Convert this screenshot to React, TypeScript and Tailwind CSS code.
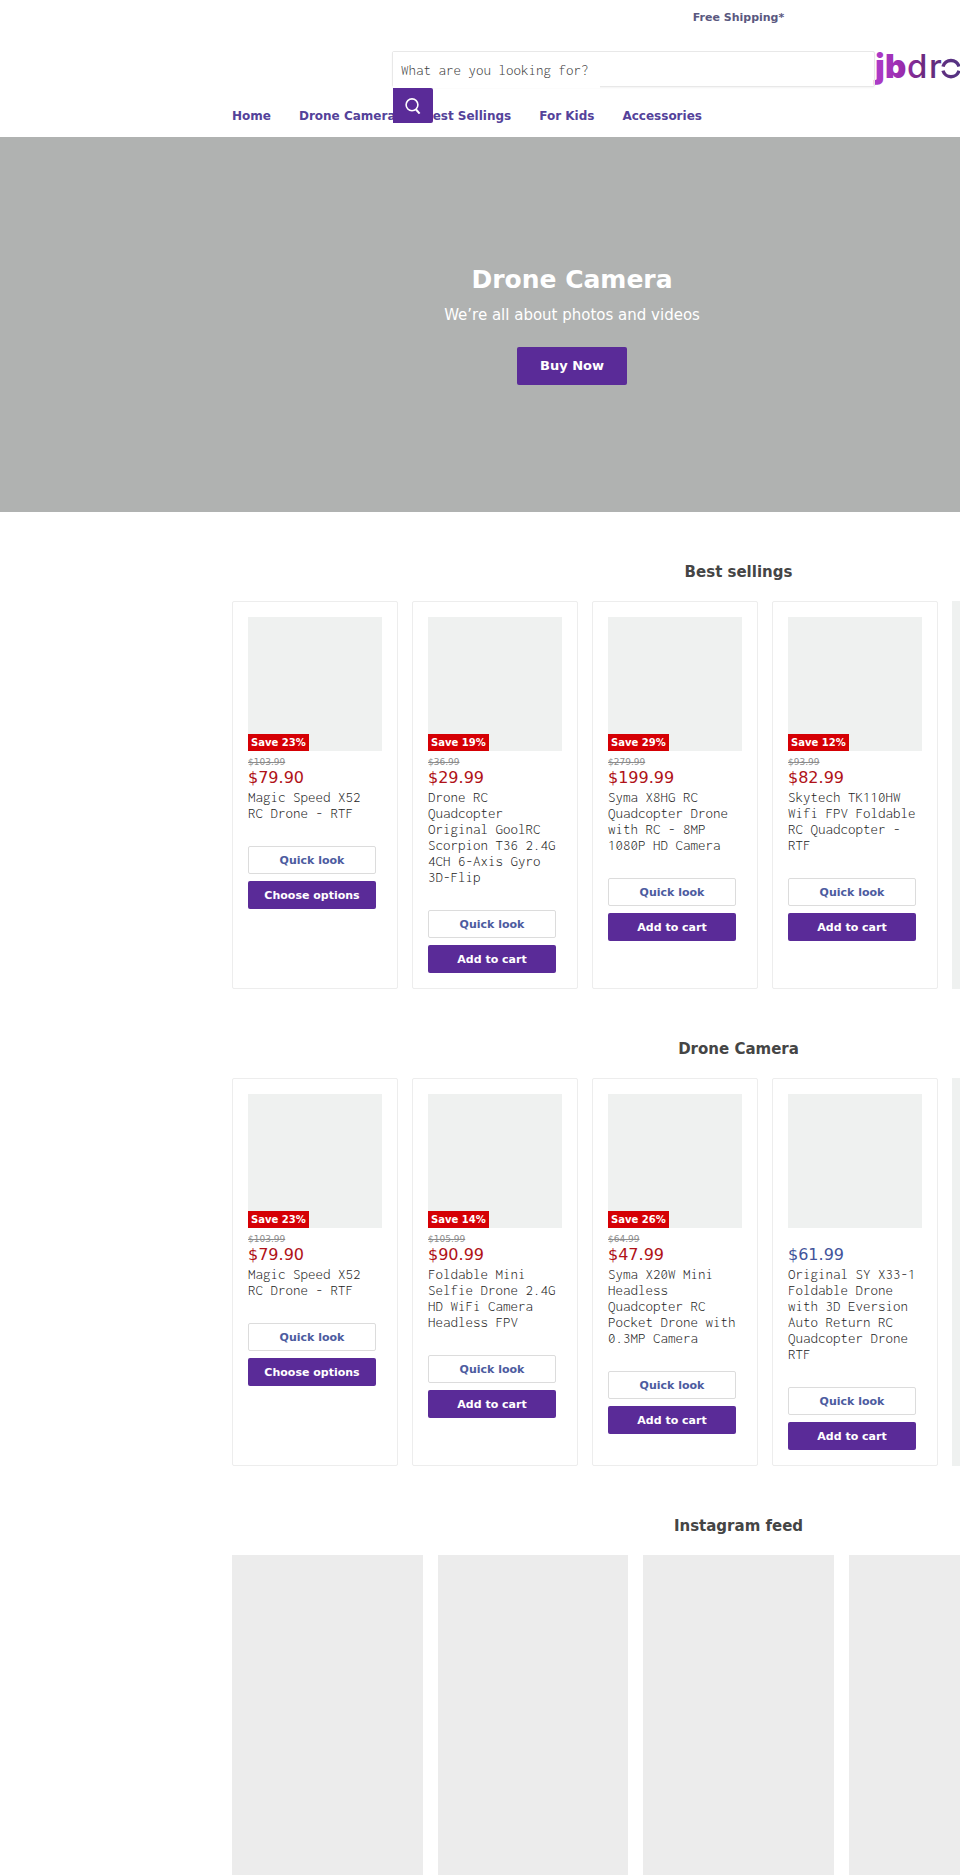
type Product = {
  title: string;
  price: string;
  oldPrice?: string;
  save?: string;
  action: "Add to cart" | "Choose options";
};

const navItems = ["Home", "Drone Camera", "Best Sellings", "For Kids", "Accessories"];

const bestSellings: Product[] = [
  {
    title: "Magic Speed X52 RC Drone - RTF",
    price: "$79.90",
    oldPrice: "$103.99",
    save: "Save 23%",
    action: "Choose options",
  },
  {
    title: "Drone RC Quadcopter Original GoolRC Scorpion T36 2.4G 4CH 6-Axis Gyro 3D-Flip",
    price: "$29.99",
    oldPrice: "$36.99",
    save: "Save 19%",
    action: "Add to cart",
  },
  {
    title: "Syma X8HG RC Quadcopter Drone with RC - 8MP 1080P HD Camera",
    price: "$199.99",
    oldPrice: "$279.99",
    save: "Save 29%",
    action: "Add to cart",
  },
  {
    title: "Skytech TK110HW Wifi FPV Foldable RC Quadcopter - RTF",
    price: "$82.99",
    oldPrice: "$93.99",
    save: "Save 12%",
    action: "Add to cart",
  },
];

const droneCamera: Product[] = [
  {
    title: "Magic Speed X52 RC Drone - RTF",
    price: "$79.90",
    oldPrice: "$103.99",
    save: "Save 23%",
    action: "Choose options",
  },
  {
    title: "Foldable Mini Selfie Drone 2.4G HD WiFi Camera Headless FPV",
    price: "$90.99",
    oldPrice: "$105.99",
    save: "Save 14%",
    action: "Add to cart",
  },
  {
    title: "Syma X20W Mini Headless Quadcopter RC Pocket Drone with 0.3MP Camera",
    price: "$47.99",
    oldPrice: "$64.99",
    save: "Save 26%",
    action: "Add to cart",
  },
  {
    title: "Original SY X33-1 Foldable Drone with 3D Eversion Auto Return RC Quadcopter Drone RTF",
    price: "$61.99",
    action: "Add to cart",
  },
];

export default function App() {
  return (
    <div className="overflow-hidden bg-white font-['DejaVu_Sans',sans-serif]">
      <div className="min-w-[1477px]">
        <Header />
        <main>
          <Hero />
          <ProductRow title="Best sellings" products={bestSellings} />
          <ProductRow title="Drone Camera" products={droneCamera} />
          <InstagramFeed />
        </main>
      </div>
    </div>
  );
}

function Header() {
  return (
    <header className="px-[232px]">
      <p className="pt-[9px] pb-[9px] text-center text-[11px] leading-[18px] font-bold text-[#5a5880]">
        Free Shipping*
      </p>
      <div className="mt-[15px] flex h-9 items-start">
        <form
          className="relative ml-[160px] h-9 w-[483px] shrink-0 rounded-xs border border-[#e8e8e8] shadow-xs"
          onSubmit={(e) => e.preventDefault()}
        >
          <input
            type="text"
            aria-label="Search"
            placeholder="What are you looking for?"
            className="block h-9 w-[207px] bg-white px-2 font-['Inconsolata','DejaVu_Sans_Mono',monospace] text-[15px] font-light text-[#333333] outline-none placeholder:text-[#404040]"
          />
          <button
            type="submit"
            aria-label="Submit search"
            className="absolute top-full left-0 z-10 mt-[2px] flex h-[35px] w-10 items-center justify-center rounded-r-xs bg-[#5a2b98] text-white"
          >
            <svg width="16" height="16" viewBox="0 0 16 16" fill="none" stroke="currentColor" strokeWidth="1.6">
              <circle cx="7" cy="6.8" r="5.9" />
              <path d="M10.6 11l4 4.6" strokeWidth="2" />
            </svg>
          </button>
        </form>
        <a href="#" aria-label="jbdrones" className="shrink-0">
          <Logo />
        </a>
      </div>
      <nav className="flex gap-7 pt-5 pb-3 text-[12px] leading-[18px] font-bold text-[#54429a]">
        {navItems.map((item) => (
          <a key={item} href="#">
            {item}
          </a>
        ))}
      </nav>
    </header>
  );
}

function Logo() {
  return (
    <svg width="85" height="36" viewBox="0 0 85 36" className="overflow-visible font-['Inter',sans-serif]">
      <defs>
        <linearGradient id="logo" gradientUnits="userSpaceOnUse" x1="0" y1="0" x2="90" y2="0">
          <stop offset="0" stopColor="#ae3cc8" />
          <stop offset="0.3" stopColor="#9a2cae" />
          <stop offset="0.55" stopColor="#6b2a7c" />
          <stop offset="1" stopColor="#503584" />
        </linearGradient>
      </defs>
      <g fill="url(#logo)" fontSize="33">
        <text x="0 10" y="27" fontWeight="900">jb</text>
        <text x="32 54" y="27" fontWeight="500">dr</text>
      </g>
      {/* the split ring stands in for the "o" */}
      <g fill="none" stroke="url(#logo)" strokeWidth="3.4">
        <path d="M68 15.6a8.3 8.3 0 0 1 16 0" />
        <path d="M68 19.6a8.3 8.3 0 0 0 16 0" />
      </g>
    </svg>
  );
}

function Hero() {
  return (
    <section className="flex h-[375px] flex-col items-center bg-[#b0b2b1] pt-[125px] pr-[333px] text-white">
      <h1 className="text-[25px] leading-9 font-bold">Drone Camera</h1>
      <p className="mt-[5px] text-[15px] leading-6">We’re all about photos and videos</p>
      <a
        href="#"
        className="mt-5 flex h-[38px] w-[110px] items-center justify-center rounded-xs bg-[#5a2b98] text-[13px] font-bold"
      >
        Buy Now
      </a>
    </section>
  );
}

function SectionTitle({ children }: { children: React.ReactNode }) {
  return (
    <h2 className="mb-[19px] text-center text-[15px] leading-5 font-bold text-[#454545]">{children}</h2>
  );
}

function ProductRow({ title, products }: { title: string; products: Product[] }) {
  return (
    <section className="px-[232px] pt-[50px]">
      <SectionTitle>{title}</SectionTitle>
      <div className="flex gap-[14px]">
        {products.map((product) => (
          <ProductCard key={product.title} product={product} />
        ))}
        <div className="w-[166px] shrink-0 bg-[#eff1f0]" />
      </div>
    </section>
  );
}

function ProductCard({ product }: { product: Product }) {
  return (
    <article className="w-[166px] shrink-0 rounded-xs border border-[#ededed] p-[15px]">
      <div className="flex aspect-square items-end bg-[#eff1f0]">
        {product.save && (
          <span className="bg-[#d50005] px-[3px] text-[10px] leading-[17px] font-bold text-white">
            {product.save}
          </span>
        )}
      </div>
      <p className="mt-1 h-[14px] text-[9px] leading-[14px] text-[#8c8c8c]">
        {product.oldPrice && <s>{product.oldPrice}</s>}
      </p>
      <p
        className={`text-[16px] leading-[18px] ${product.oldPrice ? "text-[#b01218]" : "text-[#43549b]"}`}
      >
        {product.price}
      </p>
      <h3 className="mt-[2px] font-['Inconsolata','DejaVu_Sans_Mono',monospace] text-[15px] leading-4 font-light text-[#222222]">
        <a href="#">{product.title}</a>
      </h3>
      <div className="mt-[25px] mr-[6px] flex flex-col gap-[7px] text-[11px] leading-[14px] font-bold">
        <button type="button" className="h-7 rounded-xs border border-[#dcdcdc] pt-px text-[#4d5c9f]">
          Quick look
        </button>
        <button type="button" className="h-7 rounded-xs bg-[#5a2b98] pt-px text-white">
          {product.action}
        </button>
      </div>
    </article>
  );
}

function InstagramFeed() {
  return (
    <section className="px-[232px] pt-[50px]">
      <SectionTitle>Instagram feed</SectionTitle>
      <div className="grid grid-cols-5 gap-[15px]">
        {[1, 2, 3, 4, 5].map((n) => (
          <div key={n} className="h-80 bg-[#ececec]" />
        ))}
      </div>
    </section>
  );
}
